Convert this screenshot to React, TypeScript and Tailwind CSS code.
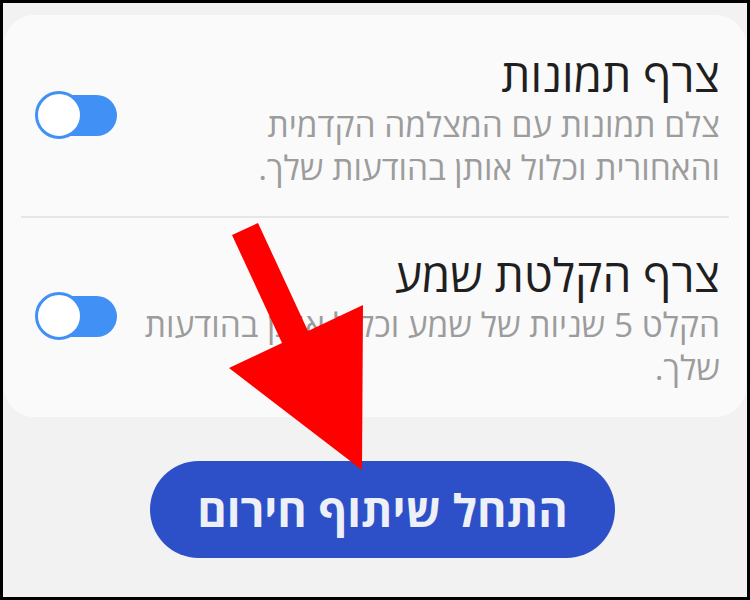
import React from 'react';

const Toggle = ({ top }: { top: string }) => (
  <div className={`relative w-[84px] h-[48px] shrink-0 ${top}`}>
    <div className="absolute left-[10px] top-[4px] w-[72px] h-[41px] rounded-full bg-[#4090f5]" />
    <div className="absolute left-0 top-0 w-[48px] h-[48px] rounded-full bg-white border-[3px] border-[#4090f5]" />
  </div>
);

const Row = ({ title, lines, pad, toggleTop }: { title: string; lines: string[]; pad: string; toggleTop: string }) => (
  <div className={`flex items-start justify-between gap-6 pr-[26px] pl-[31px] ${pad}`}>
    <div className="flex-1 text-right">
      <div className="text-[46px] leading-[52px] text-[#1f1f1f]">{title}</div>
      <div className="text-[33.5px] leading-[43px] text-[#9c9c9c] mt-[3px] whitespace-nowrap">
        {lines.map((l) => (
          <div key={l}>{l}</div>
        ))}
      </div>
    </div>
    <Toggle top={toggleTop} />
  </div>
);

export default function App() {
  return (
    <div
      className="relative w-[750px] h-[600px] border-[3px] border-black bg-[#f2f2f2] overflow-hidden"
      style={{ fontFamily: '"Open Sans", "Liberation Sans", "DejaVu Sans", sans-serif' }}
      dir="rtl"
    >
      <div className="mt-[12px] mx-[1px] rounded-[30px] bg-[#fafafa] h-[402px] flex flex-col">
        <div className="h-[201px]">
          <Row
            title="צרף תמונות"
            lines={['צלם תמונות עם המצלמה הקדמית', 'והאחורית וכלול אותן בהודעות שלך.']}
            pad="pt-[33px]"
            toggleTop="mt-[43px]"
          />
        </div>
        <div className="mx-[17px] h-[2px] bg-[#e6e6e6]" />
        <div className="h-[199px]">
          <Row
            title="צרף הקלטת שמע"
            lines={['הקלט 5 שניות של שמע וכלול אותן בהודעות', 'שלך.']}
            pad="pt-[30px]"
            toggleTop="mt-[44px]"
          />
        </div>
      </div>

      <div className="flex justify-start mt-[44px]" dir="ltr">
        <div className="ml-[147px] w-[465px] h-[97px] rounded-full bg-[#2d50c9] flex items-center justify-center">
          <span className="text-[45px] font-bold text-[#eef0f8]" dir="rtl">התחל שיתוף חירום</span>
        </div>
      </div>

      <svg className="absolute left-0 top-0 pointer-events-none" width="750" height="600" viewBox="0 0 750 600">
        <polygon
          points="232,235 258,223 308,331 363,305 362,470 229,368 282,343"
          fill="#ff0000"
          transform="translate(-3,-3)"
        />
      </svg>
    </div>
  );
}
